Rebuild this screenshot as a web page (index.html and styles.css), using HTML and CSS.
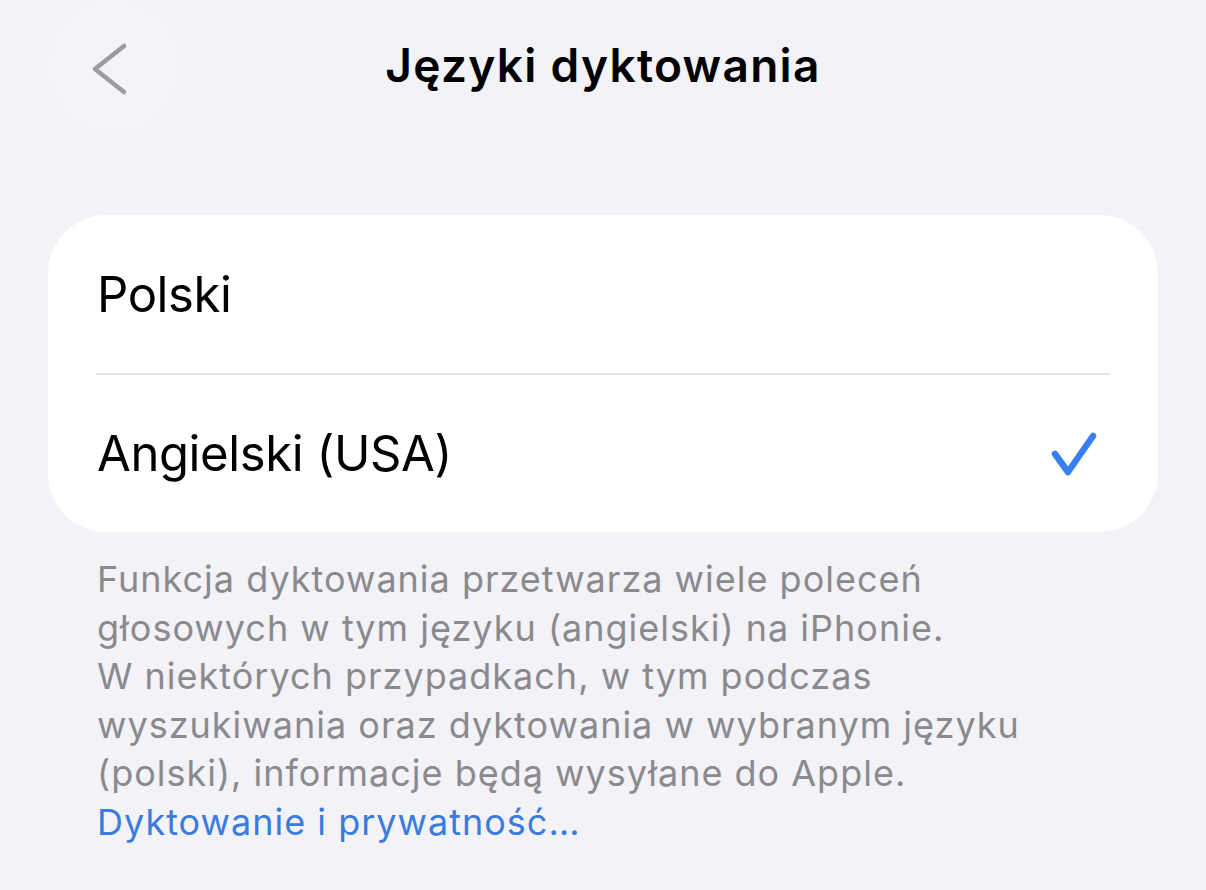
FILE: index.html
```html
<!DOCTYPE html>
<html lang="pl">
<head>
    <meta charset="UTF-8">
    <meta name="viewport" content="width=device-width, initial-scale=1.0">
    <link rel="stylesheet" href="styles.css">
    <title>Języki dyktowania</title>
</head>
<body>
    <div id="screen">
        <header class="nav-bar">
            <button class="back-btn" aria-label="Wstecz">
                <svg width="132" height="132" viewBox="0 0 132 132">
                    <path d="M76 46 L47 69 L76 92" fill="none" stroke="#9c9ca0" stroke-width="4.5" stroke-linecap="round" stroke-linejoin="round"/>
                </svg>
            </button>
            <h1 class="nav-title">Języki dyktowania</h1>
            <span></span>
        </header>

        <div class="group">
            <div class="row">
                <span class="row-label">Polski</span>
            </div>
            <div class="row">
                <span class="row-label">Angielski (USA)</span>
                <svg class="check" width="50" height="46" viewBox="0 0 50 46">
                    <path d="M5 23 L18 41 L43 5" fill="none" stroke="#3a7ff0" stroke-width="6.5" stroke-linecap="round" stroke-linejoin="round"/>
                </svg>
            </div>
        </div>

        <p class="footer-note">
            Funkcja dyktowania przetwarza wiele poleceń głosowych w tym języku (angielski) na iPhonie.<br>
            W niektórych przypadkach, w tym podczas wyszukiwania oraz dyktowania w wybranym języku (polski), informacje będą wysyłane do Apple.
            <a href="#" class="footer-link">Dyktowanie i prywatność…</a>
        </p>
    </div>
</body>
</html>
```
FILE: styles.css
```css
body {
    margin: 0;
    background-color: #f2f2f7;
    font-family: Inter, 'Noto Sans', sans-serif;
    color: #000000;
}

#screen {
    width: 1206px;
    height: 890px;
    padding: 0 48px;
    box-sizing: border-box;
    overflow: hidden;
}

.nav-bar {
    display: grid;
    grid-template-columns: 132px 1fr 132px;
    align-items: center;
    height: 132px;
    margin-bottom: 83px;
}

.back-btn {
    width: 132px;
    height: 132px;
    padding: 0;
    border: none;
    border-radius: 50%;
    background-color: #f4f4f8;
    display: flex;
    cursor: pointer;
}

.nav-title {
    margin: 0;
    text-align: center;
    font-size: 46px;
    font-weight: 600;
    letter-spacing: 1.3px;
    padding-bottom: 2px;
}

.group {
    background-color: #ffffff;
    border-radius: 58px;
    overflow: hidden;
}

.row {
    display: flex;
    align-items: center;
    justify-content: space-between;
    height: 158px;
    margin: 0 48px 0 49px;
    box-sizing: border-box;
}

.row + .row {
    border-top: 2px solid #e3e3e8;
    margin-left: 48px;
    padding-left: 1px;
    height: 159px;
}

.row-label {
    font-size: 49px;
    letter-spacing: -0.4px;
}

.check {
    margin-right: 10px;
}

.footer-note {
    margin: 0;
    padding: 23px 48px 0 49px;
    font-size: 36px;
    line-height: 48.6px;
    letter-spacing: 1px;
    color: #8a8a8e;
}

.footer-link {
    display: block;
    color: #3a7be0;
    text-decoration: none;
}
```
